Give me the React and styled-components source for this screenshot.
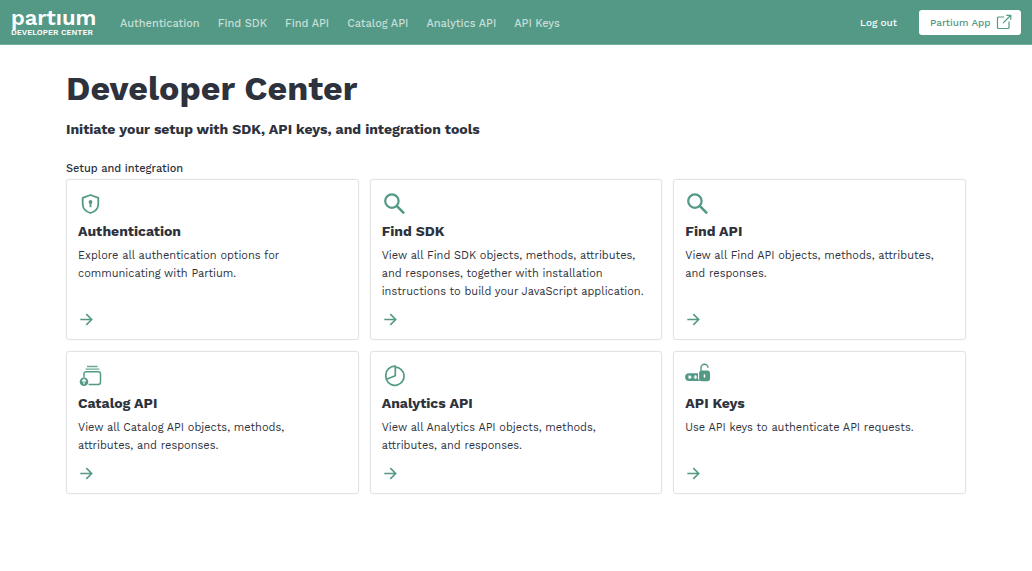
import React from "react";
import styled, { createGlobalStyle } from "styled-components";

const green = "#539986";
const ink = "#2d323d";

const GlobalStyle = createGlobalStyle`
  *, *::before, *::after { box-sizing: border-box; }
  body {
    margin: 0;
    background: #fff;
    color: ${ink};
    font-family: "Work Sans", Inter, "Noto Sans", sans-serif;
    font-size: 11px;
  }
  h1, h2, h3, p, ul { margin: 0; padding: 0; }
`;

const Header = styled.header`
  display: flex;
  align-items: center;
  height: 45px;
  padding: 0 11px;
  background: ${green};
  border-bottom: 1px solid #75ae9f;
`;

const Brand = styled.a`
  display: flex;
  flex-direction: column;
  width: 85px;
  color: #fff;
  text-decoration: none;
  white-space: nowrap;
`;

const BrandName = styled.span`
  font-size: 22px;
  font-weight: 600;
  line-height: 20px;
`;

const BrandSub = styled.span`
  font-size: 8px;
  font-weight: 600;
  line-height: 9px;
`;

const Nav = styled.nav`
  display: flex;
  flex: 1;
  gap: 18px;
  margin-left: 24px;
  padding-top: 3px;
`;

const NavLink = styled.a`
  color: #c6ded7;
  font-size: 11px;
  font-weight: 500;
  line-height: 18px;
  text-decoration: none;
  white-space: nowrap;
`;

const LogoutButton = styled.button`
  margin-right: 22px;
  padding: 0;
  border: 0;
  background: none;
  color: #fff;
  font: inherit;
  font-size: 10px;
  font-weight: 500;
  cursor: pointer;
`;

const AppLink = styled.a`
  display: flex;
  align-items: center;
  justify-content: space-between;
  gap: 5px;
  min-width: 102px;
  height: 25px;
  padding: 0 9px 0 11px;
  border-radius: 3px;
  background: #fff;
  color: ${green};
  font-size: 10px;
  font-weight: 500;
  text-decoration: none;
  white-space: nowrap;
`;

const Main = styled.main`
  max-width: 916px;
  margin: 0 auto;
  padding: 21px 8px;
`;

const PageTitle = styled.h1`
  font-size: 34px;
  font-weight: 700;
  line-height: 44px;
`;

const Lead = styled.h2`
  margin-top: 8px;
  font-size: 14px;
  font-weight: 700;
  line-height: 22px;
`;

const SectionLabel = styled.p`
  margin-top: 20px;
  font-size: 11px;
  font-weight: 500;
  line-height: 18px;
`;

const Grid = styled.div`
  display: grid;
  grid-template-columns: repeat(auto-fit, minmax(260px, 1fr));
  gap: 11px;
  margin-top: 1px;
`;

const Card = styled.a`
  display: flex;
  flex-direction: column;
  min-height: 143px;
  padding: 11px;
  border: 1px solid #e3e3e5;
  border-radius: 3px;
  box-shadow: 0 0 1px #d8d8da;
  color: inherit;
  text-decoration: none;
`;

const IconSlot = styled.span`
  display: flex;
  height: 26px;
  color: ${green};
`;

const CardTitle = styled.h3`
  margin-top: 2px;
  font-size: 14px;
  font-weight: 700;
  line-height: 24px;
`;

const CardText = styled.p`
  margin: 4px 0 10px;
  padding-right: 5px;
  font-size: 11px;
  line-height: 18px;
`;

const ArrowSlot = styled.span`
  display: flex;
  margin-top: auto;
  color: ${green};
`;

const ShieldIcon = () => (
  <svg width="26" height="26" viewBox="0 0 26 26" fill="none" stroke="currentColor" strokeWidth="1.8" aria-hidden="true">
    <path d="M12.5 4 20.300 6.800v6.100c0 4.100-3 7.600-7.800 9.100C7.700 20.500 4.700 17 4.700 12.900V6.800Z" strokeLinejoin="round" />
    <circle cx="12.500" cy="11" r="1.900" fill="currentColor" stroke="none" />
    <path d="M12.500 11.500v4.700" />
  </svg>
);

const SearchIcon = () => (
  <svg width="26" height="26" viewBox="0 0 26 26" fill="none" stroke="currentColor" aria-hidden="true">
    <circle cx="9.900" cy="10.100" r="6.700" strokeWidth="2.200" />
    <path d="m14.700 14.900 7.400 7.400" strokeWidth="2.600" />
  </svg>
);

const CatalogIcon = () => (
  <svg width="26" height="26" viewBox="0 0 26 26" fill="none" stroke="currentColor" aria-hidden="true">
    <path d="M9 3.500h10.600M7.500 6.100h13.800" strokeWidth="1.400" opacity="0.85" />
    <path d="M6 14.500v-3.600A2.200 2.200 0 0 1 8.200 8.700h12.100a2.200 2.200 0 0 1 2.200 2.200v8.300a2.200 2.200 0 0 1-2.200 2.200H10.600" strokeWidth="1.500" />
    <circle cx="6" cy="18.700" r="4.300" fill="currentColor" stroke="none" />
    <path d="M6 21.200v-4.700M4 18.400 6 16.400l2 2" stroke="#fff" strokeWidth="1.200" />
  </svg>
);

const PieIcon = () => (
  <svg width="26" height="26" viewBox="0 0 26 26" fill="none" stroke="currentColor" strokeWidth="1.700" strokeLinejoin="round" aria-hidden="true">
    <path d="M13.300 4.100a9.100 9.100 0 1 1-8.900 12.100l8.900-3.500Z" />
    <path d="M13.300 4.100v-.9C7.600 3.200 3.800 7.200 3.800 11.800c0 1.600.2 3 .6 4.400" />
  </svg>
);

const KeysIcon = () => (
  <svg width="26" height="26" viewBox="0 0 26 26" fill="none" aria-hidden="true">
    <path d="M4 10.200h9v7.800H4A3.900 3.900 0 0 1 .1 14.100 3.900 3.900 0 0 1 4 10.200Z" fill="currentColor" />
    <path d="M13 17.200h1.800" stroke="currentColor" strokeWidth="1.600" />
    <path d="M3 14.100h3.600M4.800 12.300v3.600M8.700 14.100h3.600M10.500 12.300v3.600M3.700 13l2.200 2.200M5.900 13l-2.200 2.200M9.400 13l2.200 2.200M11.600 13l-2.200 2.200" stroke="#fff" strokeWidth="1" />
    <rect x="14.100" y="7.600" width="10.900" height="10.700" rx="2.700" fill="currentColor" />
    <path d="M16 8.500V4.800a3.500 3.500 0 0 1 7 0" stroke="currentColor" strokeWidth="1.400" />
    <path d="M19.500 12v2" stroke="#fff" strokeWidth="1.600" strokeLinecap="round" />
  </svg>
);

const ArrowIcon = () => (
  <svg width="17" height="17" viewBox="0 0 17 17" fill="none" stroke="currentColor" strokeWidth="1.600" aria-hidden="true">
    <path d="M2.300 8.500h11.200M8.300 3.100l5.400 5.400-5.400 5.400" />
  </svg>
);

const ExternalIcon = () => (
  <svg width="16" height="16" viewBox="0 0 16 16" fill="none" stroke="currentColor" strokeWidth="1.200" aria-hidden="true">
    <path d="M8.200 3H2.500A1 1 0 0 0 1.500 4v9.500a1 1 0 0 0 1 1H12a1 1 0 0 0 1-1V7.500" />
    <path d="M7 9.200 14.500 1.500M10.300 1.300h4.500v4.400" />
  </svg>
);

const links = ["Authentication", "Find SDK", "Find API", "Catalog API", "Analytics API", "API Keys"];

const cards = [
  { title: "Authentication", icon: ShieldIcon, text: "Explore all authentication options for communicating with Partium." },
  { title: "Find SDK", icon: SearchIcon, text: "View all Find SDK objects, methods, attributes, and responses, together with installation instructions to build your JavaScript application." },
  { title: "Find API", icon: SearchIcon, text: "View all Find API objects, methods, attributes, and responses." },
  { title: "Catalog API", icon: CatalogIcon, text: "View all Catalog API objects, methods, attributes, and responses." },
  { title: "Analytics API", icon: PieIcon, text: "View all Analytics API objects, methods, attributes, and responses." },
  { title: "API Keys", icon: KeysIcon, text: "Use API keys to authenticate API requests." },
];

export default function App() {
  return (
    <>
      <GlobalStyle />
      <Header>
        <Brand href="#">
          <BrandName>partıum</BrandName>
          <BrandSub>DEVELOPER CENTER</BrandSub>
        </Brand>
        <Nav>
          {links.map((label) => (
            <NavLink key={label} href="#">{label}</NavLink>
          ))}
        </Nav>
        <LogoutButton type="button">Log out</LogoutButton>
        <AppLink href="#">
          Partium App
          <ExternalIcon />
        </AppLink>
      </Header>
      <Main>
        <PageTitle>Developer Center</PageTitle>
        <Lead>Initiate your setup with SDK, API keys, and integration tools</Lead>
        <SectionLabel>Setup and integration</SectionLabel>
        <Grid>
          {cards.map(({ title, icon: Icon, text }) => (
            <Card key={title} href="#">
              <IconSlot><Icon /></IconSlot>
              <CardTitle>{title}</CardTitle>
              <CardText>{text}</CardText>
              <ArrowSlot><ArrowIcon /></ArrowSlot>
            </Card>
          ))}
        </Grid>
      </Main>
    </>
  );
}
